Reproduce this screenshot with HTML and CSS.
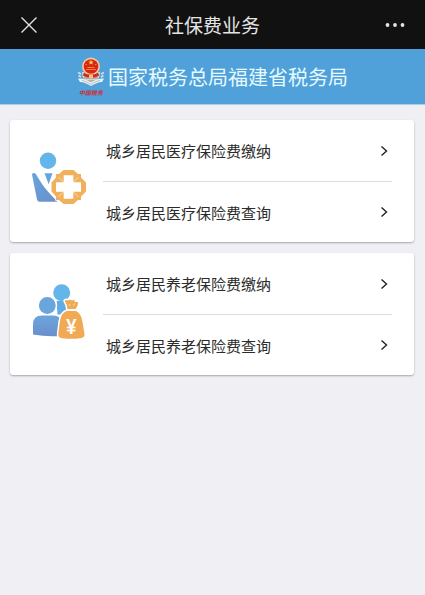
FILE: index.html
```html
<!DOCTYPE html>
<html lang="zh-CN">
<head>
  <meta charset="UTF-8" />
  <meta name="viewport" content="width=device-width, initial-scale=1.0" />
  <title>社保费业务</title>
  <link rel="stylesheet" href="styles.css">
</head>
<body>
<header class="navBar">
  <button class="navBtn" type="button" aria-label="关闭">
    <svg width="18" height="18" viewBox="0 0 18 18" fill="none" stroke="#e4e4e4" stroke-width="1.4">
      <path d="M1.5 1.5l15 15M16.5 1.5l-15 15" />
    </svg>
  </button>
  <h1>社保费业务</h1>
  <button class="navBtn" type="button" aria-label="更多">
    <svg width="20" height="6" viewBox="0 0 20 6" fill="#e4e4e4">
      <circle cx="2.5" cy="3" r="1.9" />
      <circle cx="10" cy="3" r="1.9" />
      <circle cx="17.5" cy="3" r="1.9" />
    </svg>
  </button>
</header>

<div class="banner">
  <svg class="emblem" width="28" height="40" viewBox="0 0 28 40" aria-hidden="true">
    <path d="M4 17L1 15.500M4 20L1.500 18.500M24 17l3-1.500M24 20l2.500-1.500" stroke="#d9dde0" stroke-width="1.500" />
    <path d="M5 15c0 6 3 10 9 12 6-2 9-6 9-12z" fill="#d8d3c8" />
    <path d="M6 18l16 0M7 21l14 0M10 24l8 0" stroke="#8c8f96" stroke-width="1" />
    <circle cx="14" cy="9.500" r="9" fill="#f0c9a0" />
    <circle cx="14" cy="9.500" r="7.300" fill="#dd2418" />
    <path d="M14 2.800l.8 1.600 1.800.2-1.300 1.200.3 1.700-1.600-.8-1.600.8.3-1.700-1.300-1.200 1.800-.2z" fill="#f9cf4c" />
    <path d="M9 12.500h10M10.500 10.500h7M8.500 7.500h1.500M18 7.500h1.500" stroke="#f08a2e" stroke-width="1" />
    <path d="M7 15.500c4 3 10 3 14 0l1 3c-4 3-12 3-16 0z" fill="#cf2b20" />
    <path d="M12 18h4v3h-4z" fill="#f0c27a" />
    <path d="M1 21.500c4-.5 8 1 13 4 5-3 9-4.500 13-4l-2 3.500c-4 0-7 2-11 4-4-2-7-4-11-4z" fill="#eef3f5" />
    <path d="M5 23.500c3 .5 6 2 9 4 3-2 6-3.500 9-4" fill="none" stroke="#9fb0ba" stroke-width=".8" />
    <text class="emblemText" x="14" y="38" text-anchor="middle">中国税务</text>
  </svg>
  <h2>国家税务总局福建省税务局</h2>
</div>

<main class="pageContent">
  <section class="card">
    <svg class="cardIcon" viewBox="0 0 60 60" aria-hidden="true">
      <defs>
        <linearGradient id="medicalBody" x1="0" y1="0" x2="1" y2="1">
          <stop offset="0" stop-color="#68a4dc" />
          <stop offset="1" stop-color="#6a8fcb" />
        </linearGradient>
      </defs>
      <circle cx="18" cy="9.700" r="8.200" fill="#63b5ea" />
      <path d="M2 23.500Q2 22 3.500 22Q5 22 6 23.300C11 32 17 41 27 49.700V50.700H9.500Q7.500 50.700 7 48.500z" fill="url(#medicalBody)" />
      <path d="M14.500 22.300h8l-3.800 11z" fill="#68a4dc" />
      <path d="M33.500 19H43.500L48 23H51V26.500L56 31.500V40.500L51 45.500V49H48L43.500 53H33.500L29 49H26V45.500L21.500 40.500V31.500L26 26.500V23H29z" fill="#f1b05b" stroke="#fff" stroke-width="1.500" paint-order="stroke" />
      <path d="M28.500 26l20 20M48.500 26l-20 20" stroke="#fff" stroke-opacity=".7" stroke-width=".8" />
      <path d="M33.700 24.300h9.600v6.900h7.700v9.600h-7.700v6.900h-9.600v-6.900h-7.700v-9.600h7.700z" fill="#fff" />
    </svg>
    <nav class="menu">
      <a class="menuItem" href="#">城乡居民医疗保险费缴纳
        <svg class="arrow" viewBox="0 0 8 12"><path d="M1.500 1.500L6.500 6l-5 4.500" /></svg>
      </a>
      <a class="menuItem" href="#">城乡居民医疗保险费查询
        <svg class="arrow" viewBox="0 0 8 12"><path d="M1.500 1.500L6.500 6l-5 4.500" /></svg>
      </a>
    </nav>
  </section>

  <section class="card">
    <svg class="cardIcon" viewBox="0 0 60 60" aria-hidden="true">
      <defs>
        <linearGradient id="pensionBody" x1="0" y1="0" x2="0" y2="1">
          <stop offset="0" stop-color="#6ba5dc" />
          <stop offset="1" stop-color="#6a8fcb" />
        </linearGradient>
      </defs>
      <circle cx="31.700" cy="8.800" r="8.500" fill="#63b5ea" />
      <path d="M26.500 17h9l3 6-6 7.500-5 0z" fill="#62ace5" />
      <circle cx="17.300" cy="21.500" r="8.400" fill="#6aa5dc" stroke="#fff" stroke-width="3" paint-order="stroke" />
      <path d="M3 50.500V40.500Q3 31.500 12 31.500H23Q28.500 31.500 31 35V52Q16 53 3 50.500z" fill="url(#pensionBody)" stroke="#fff" stroke-width="2" paint-order="stroke" />
      <g fill="#f1a954" stroke="#fff" stroke-width="3" stroke-linejoin="round" paint-order="stroke">
        <path d="M34.700 17Q36 15.500 38 16.500L40 15.500l2 1 2-.8 1 2.300 3.300.3Q48 22 45.500 25H37.500Q37.300 21 34.700 17z" />
        <path d="M36.500 27h9.500Q51 29 52.500 38L54.500 50Q55 54 50 54.200Q41 55.300 32.500 54.200Q27.800 54 28.300 50L29.800 38Q31 29 36.500 27z" />
      </g>
      <path d="M39 20l1 2M44.500 19.500l-1 2" stroke="#fff" stroke-width=".6" />
      <text class="yen" x="41.300" y="50" text-anchor="middle">¥</text>
    </svg>
    <nav class="menu">
      <a class="menuItem" href="#">城乡居民养老保险费缴纳
        <svg class="arrow" viewBox="0 0 8 12"><path d="M1.500 1.500L6.500 6l-5 4.500" /></svg>
      </a>
      <a class="menuItem" href="#">城乡居民养老保险费查询
        <svg class="arrow" viewBox="0 0 8 12"><path d="M1.500 1.500L6.500 6l-5 4.500" /></svg>
      </a>
    </nav>
  </section>
</main>
</body>
</html>
```

FILE: styles.css
```css
* { margin: 0; padding: 0; box-sizing: border-box; }
html, body {
  min-height: 100%;
  font-family: "Noto Sans CJK SC", sans-serif;
  background-color: #efeff4;
  color: #2b2b2b;
}
.navBar {
  display: flex;
  align-items: center;
  justify-content: space-between;
  background-color: #111;
  height: 49px;
  padding: 0 20px;
}
.navBar h1 {
  font-size: 19px;
  line-height: 28px;
  font-weight: 400;
  color: #e4e4e4;
}
.navBtn {
  display: flex;
  align-items: center;
  width: 20px;
  height: 28px;
  border: none;
  background: none;
  cursor: pointer;
}
.banner {
  display: flex;
  align-items: center;
  justify-content: center;
  gap: 3px;
  background-color: #50a0da;
  height: 56px;
  border-bottom: 1px solid #a9cdea;
}
.banner h2 {
  font-size: 20px;
  line-height: 28px;
  font-weight: 400;
  color: #e6fbff;
}
.emblemText {
  font-size: 6px;
  font-weight: 700;
  font-style: italic;
  fill: #c9303a;
}
.pageContent {
  display: flex;
  flex-direction: column;
  gap: 11px;
  padding: 15px 11px 15px 10px;
}
.card {
  display: flex;
  align-items: center;
  background-color: #fff;
  padding: 0 22px 0 20px;
  border-radius: 3px;
  box-shadow: 0 1px 2px rgba(0, 0, 0, 0.3);
}
.cardIcon {
  flex: none;
  width: 60px;
  height: 60px;
  margin-right: 13px;
}
.yen {
  font-family: Roboto, sans-serif;
  font-size: 20px;
  font-weight: 500;
  fill: #fff;
}
.menu {
  flex: 1;
}
.menuItem {
  display: flex;
  align-items: center;
  justify-content: space-between;
  height: 61px;
  padding: 0 4px 0 3px;
  font-size: 15px;
  color: #2b2b2b;
  text-decoration: none;
}
.menuItem + .menuItem {
  border-top: 1px solid #dcdcdc;
}
.arrow {
  width: 8px;
  height: 12px;
  fill: none;
  stroke: #222;
  stroke-width: 1.4;
}
```
